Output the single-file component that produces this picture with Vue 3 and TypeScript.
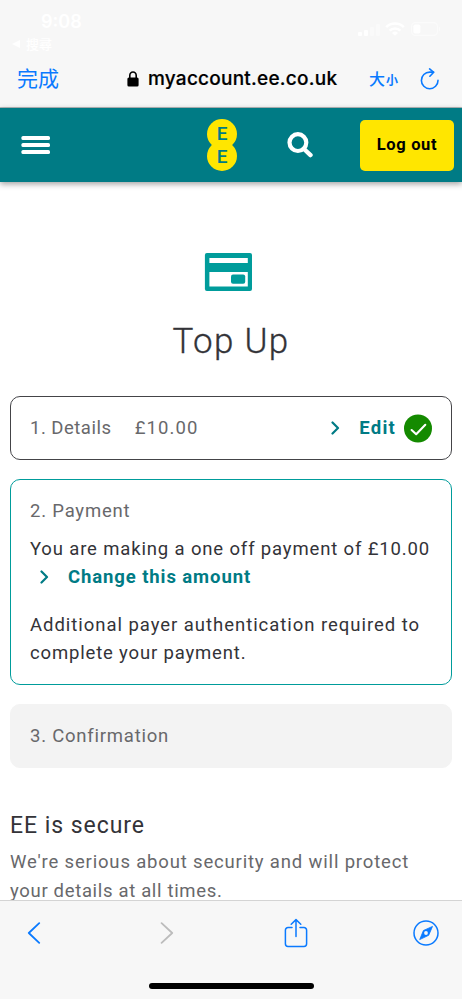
<script setup lang="ts">
const bars: number[] = [4, 6, 9, 12]
</script>

<template>
  <div class="screen">
    <div class="browser-top">
      <div class="status">
        <div class="clock">
          <span class="time">9:08</span>
          <span class="back-app">
            <svg width="8" height="8" viewBox="0 0 8 8"><path d="M8 0v8L0 4z" fill="#fff" /></svg>
            <span>搜尋</span>
          </span>
        </div>
        <div class="indicators">
          <div class="signal">
            <i v-for="(h, i) in bars" :key="h" :class="{ faint: i > 1 }" :style="{ height: h + 'px' }"></i>
          </div>
          <svg class="wifi" width="20" height="14" viewBox="0 0 20 14" fill="none" stroke="#fff" stroke-width="2.6">
            <path d="M1.2 5.2a12.4 12.4 0 0 1 17.6 0" />
            <path d="M4.6 8.7a7.6 7.6 0 0 1 10.8 0" />
            <path d="M10 13.8 7 10.9a4.3 4.3 0 0 1 6 0z" fill="#fff" stroke="none" />
          </svg>
          <svg width="30" height="14" viewBox="0 0 30 14">
            <rect x=".6" y=".6" width="25.8" height="12.8" rx="3.6" fill="none" stroke="#fbfbfb" stroke-width="1.2" />
            <rect x="2.4" y="2.4" width="7" height="9.2" rx="1.8" fill="#fff" />
            <path d="M28 4.6c1.6.8 1.6 4 0 4.8z" fill="#fbfbfb" />
          </svg>
        </div>
      </div>
      <div class="address">
        <span class="done">完成</span>
        <div class="url">
          <svg width="12" height="16" viewBox="0 0 12 16">
            <path d="M2.8 7V4.4a3.2 3.4 0 0 1 6.4 0V7" fill="none" stroke="#000" stroke-width="1.6" />
            <rect x=".4" y="6.6" width="11.2" height="9" rx="1.5" />
          </svg>
          <span class="host">myaccount.ee.co.uk</span>
        </div>
        <span class="size"><span class="big">大</span><span class="small">小</span></span>
        <svg class="reload" width="20" height="22" viewBox="0 0 20 22" fill="none" stroke="#0a7aff" stroke-width="1.6" stroke-linecap="round" stroke-linejoin="round">
          <path d="M18 12.4a8.3 8.3 0 1 1-8.3-8.3h3.8" />
          <path d="M9.6.9 13.7 4.3 9.9 8.2" />
        </svg>
      </div>
    </div>

    <header class="site-header">
      <svg class="menu" width="29" height="18" viewBox="0 0 29 18" fill="#fff">
        <rect x=".4" y="0" width="28.6" height="4" rx="1.6" />
        <rect x=".4" y="7" width="28.6" height="4" rx="1.6" />
        <rect x=".4" y="14" width="28.6" height="4" rx="1.6" />
      </svg>
      <div class="logo">
        <span class="disc">E</span>
        <span class="disc lower">E</span>
      </div>
      <svg class="search" width="26" height="26" viewBox="0 0 26 26" fill="none" stroke="#fff">
        <circle cx="10.9" cy="10.6" r="8.4" stroke-width="4.2" />
        <path d="M17 17l6.5 6.1" stroke-width="4.4" stroke-linecap="round" />
      </svg>
      <button class="logout">Log out</button>
    </header>

    <main class="page">
      <svg class="card-icon" width="48" height="38" viewBox="0 0 48 38">
        <rect x=".9" width="47.1" height="38" rx="2" fill="#009c9b" />
        <path d="M5.4 5h38.4v5H5.4zM5.4 19h38.4v14.5H5.4z" fill="#fff" />
        <rect x="27" y="21.6" width="14.2" height="9.2" rx="2" fill="#009c9b" />
      </svg>
      <h1>Top Up</h1>

      <section class="step done-step">
        <span class="step-name details">1. Details</span>
        <span class="sum">£10.00</span>
        <svg class="chev" width="9" height="14" viewBox="0 0 9 14"><path d="M1.5 1.5 7 7 1.5 12.5" /></svg>
        <a class="edit">Edit</a>
        <svg class="tick" width="28" height="29" viewBox="0 0 28 29">
          <circle cx="14" cy="14.5" r="14" fill="#148a00" />
          <path d="M7.6 16 12.2 20.2 21.3 10.8" fill="none" stroke="#fff" stroke-width="2.1" stroke-linecap="round" stroke-linejoin="round" />
        </svg>
      </section>

      <section class="step payment">
        <div class="step-name pay">2. Payment</div>
        <p class="one-off">You are making a one off payment of £10.00</p>
        <div class="change">
          <svg class="chev" width="9" height="14" viewBox="0 0 9 14"><path d="M1.5 1.5 7 7 1.5 12.5" /></svg>
          <a class="amount">Change this amount</a>
        </div>
        <p class="auth">Additional payer authentication required to<br /><span class="auth-end">complete your payment.</span></p>
      </section>

      <section class="step confirm">
        <span class="step-name conf">3. Confirmation</span>
      </section>

      <h2>EE is secure</h2>
      <p class="secure">We're serious about security and will protect<br /><span class="secure-end">your details at all times.</span></p>
    </main>

    <footer class="browser-bottom">
      <div class="tools">
        <svg width="14" height="22" viewBox="0 0 14 22"><path d="M12.2 1.2 1.8 11l10.4 9.8" fill="none" stroke="#0a7aff" stroke-width="1.8" stroke-linecap="round" stroke-linejoin="round" /></svg>
        <svg class="forward" width="14" height="22" viewBox="0 0 14 22"><path d="M1.6 1.2 12.2 11 1.6 20.8" fill="none" stroke="#bcbcbc" stroke-width="1.8" stroke-linecap="round" stroke-linejoin="round" /></svg>
        <svg class="share" width="24" height="30" viewBox="0 0 24 30" fill="none" stroke="#0a7aff" stroke-width="1.5" stroke-linecap="round" stroke-linejoin="round">
          <path d="M8 9.6H4A2.6 2.6 0 0 0 1.4 12.2v13.6A2.6 2.6 0 0 0 4 28.4h16a2.6 2.6 0 0 0 2.6-2.6V12.2A2.6 2.6 0 0 0 20 9.6h-4" />
          <path d="M12 18.6V1.6M7.2 6.2 12 1.6l4.8 4.6" />
        </svg>
        <svg class="compass" width="26" height="26" viewBox="0 0 26 26">
          <circle cx="13" cy="13" r="12" fill="none" stroke="#0a7aff" stroke-width="1.5" />
          <path d="M19.5 6.4 15.7 15.3 6.7 19.6 10.4 10.5z" fill="#0a7aff" stroke="#0a7aff" stroke-width=".8" stroke-linejoin="round" />
          <circle cx="13" cy="13" r="1.9" fill="#f7f7f7" />
        </svg>
      </div>
      <div class="home-bar"></div>
    </footer>
  </div>
</template>

<style>
body { background: #fff; }
</style>

<style scoped>
* { box-sizing: border-box; }
.screen { width: 462px; height: 999px; display: flex; flex-direction: column; overflow: hidden; background: #fff; font-family: Roboto, "Noto Sans CJK TC", sans-serif; color: #333338; }
.browser-top { flex: none; height: 108px; background: #f7f7f7; border-bottom: 1px solid #b5babb; font-family: Inter, "Noto Sans CJK TC", sans-serif; }
.status { height: 54px; display: flex; justify-content: space-between; padding: 11px 21px 0 12px; color: #fff; }
.clock { display: flex; flex-direction: column; }
.time { font-size: 18px; line-height: 21px; font-weight: 600; padding-left: 29px; }
.back-app { display: flex; align-items: center; gap: 6px; font-size: 13px; line-height: 24px; font-weight: 500; }
.indicators { display: flex; align-items: flex-start; padding-top: 11px; }
.signal { display: flex; align-items: flex-end; gap: 2px; height: 14px; width: 27px; }
.signal i { width: 4px; border-radius: 1px; background: #fff; }
.signal .faint { background: #fafafa; }
.wifi { margin-right: 6px; }
.address { height: 49px; display: flex; align-items: center; padding: 0 22px 0 17px; }
.done { width: 110px; color: #0a7aff; font-size: 21px; line-height: 30px; }
.url { display: flex; align-items: center; gap: 9px; width: 242px; }
.host { color: #000; font-size: 19px; font-weight: 500; letter-spacing: .24px; -webkit-text-stroke: .2px #000; white-space: nowrap; }
.size { width: 51px; color: #0a7aff; display: flex; align-items: baseline; gap: 1px; font-weight: 500; }
.big { font-size: 16px; line-height: 24px; }
.small { font-size: 12px; font-weight: 700; }
.reload { flex: none; }
.site-header { flex: none; height: 74px; background: #007b85; display: flex; align-items: center; padding: 0 8px 0 21px; box-shadow: 0 2px 6px rgba(0, 0, 0, .38); z-index: 1; }
.logo { margin-left: 157px; display: flex; flex-direction: column; width: 30px; }
.disc { width: 30px; height: 30px; border-radius: 50%; background: #ffe600; color: #007b85; font-size: 19px; font-weight: 500; line-height: 30px; text-align: center; }
.lower { margin-top: -8px; }
.disc.lower { line-height: 31px; }
.search { margin-left: 50px; }
.logout { margin-left: auto; width: 94px; height: 51px; padding: 0; border: 0; border-radius: 5px; background: #ffe600; color: #000; font: 700 16.5px/50px Roboto, sans-serif; letter-spacing: .65px; }
.page { flex: 1; min-height: 0; overflow: hidden; display: flex; flex-direction: column; padding: 71px 10px 0; }
.card-icon { flex: none; margin-left: 194px; }
h1 { margin: 29px 0 32px; font-size: 35px; line-height: 44px; font-weight: 300; text-align: center; letter-spacing: 1.3px; -webkit-text-stroke: .3px #333338; }
h2 { flex: none; margin: 43px 0 7px; font-size: 23px; line-height: 30px; font-weight: 400; letter-spacing: .95px; }
p { margin: 0; }
.step { flex: none; border: 1.3px solid #444448; border-radius: 10px; font-size: 18.5px; line-height: 28.5px; letter-spacing: .7px; padding: 0 19px; margin-bottom: 19px; white-space: nowrap; }
.step-name { color: #68686b; }
.done-step { height: 64px; display: flex; align-items: center; }
.details { width: 105px; letter-spacing: .5px; }
.sum { width: 197px; color: #68686b; letter-spacing: 1.1px; }
.pay { letter-spacing: .8px; }
.conf { letter-spacing: .77px; }
.chev { flex: none; fill: none; stroke: #007b85; stroke-width: 2.2; stroke-linecap: round; stroke-linejoin: round; }
.edit { width: 64px; padding-left: 19px; color: #007b85; font-weight: 700; letter-spacing: 1.3px; }
.tick { flex: none; }
.payment { height: 206px; border-color: #009c9b; padding-top: 17px; }
.one-off { margin-top: 9px; letter-spacing: .85px; }
.change { display: flex; align-items: center; gap: 19px; padding-left: 10px; color: #007b85; font-weight: 700; margin-bottom: 19px; }
.amount { letter-spacing: .9px; }
.auth { letter-spacing: .96px; }
.auth-end { letter-spacing: .83px; }
.confirm { height: 64px; margin-bottom: 0; background: #f3f3f3; border-color: #f3f3f3; display: flex; align-items: center; }
.secure { flex: none; font-size: 18.5px; line-height: 28.5px; letter-spacing: .83px; color: #68686b; white-space: nowrap; }
.secure-end { letter-spacing: .67px; }
.browser-bottom { flex: none; height: 99px; background: #f7f7f7; border-top: 1px solid #d4d4d4; }
.tools { height: 64px; display: flex; align-items: center; padding-left: 27px; }
.forward { margin-left: 119px; }
.share { margin-left: 110px; }
.compass { margin-left: 105px; }
.home-bar { width: 165px; height: 6px; margin: 18px 0 0 149px; border-radius: 3px; background: #000; }
</style>
